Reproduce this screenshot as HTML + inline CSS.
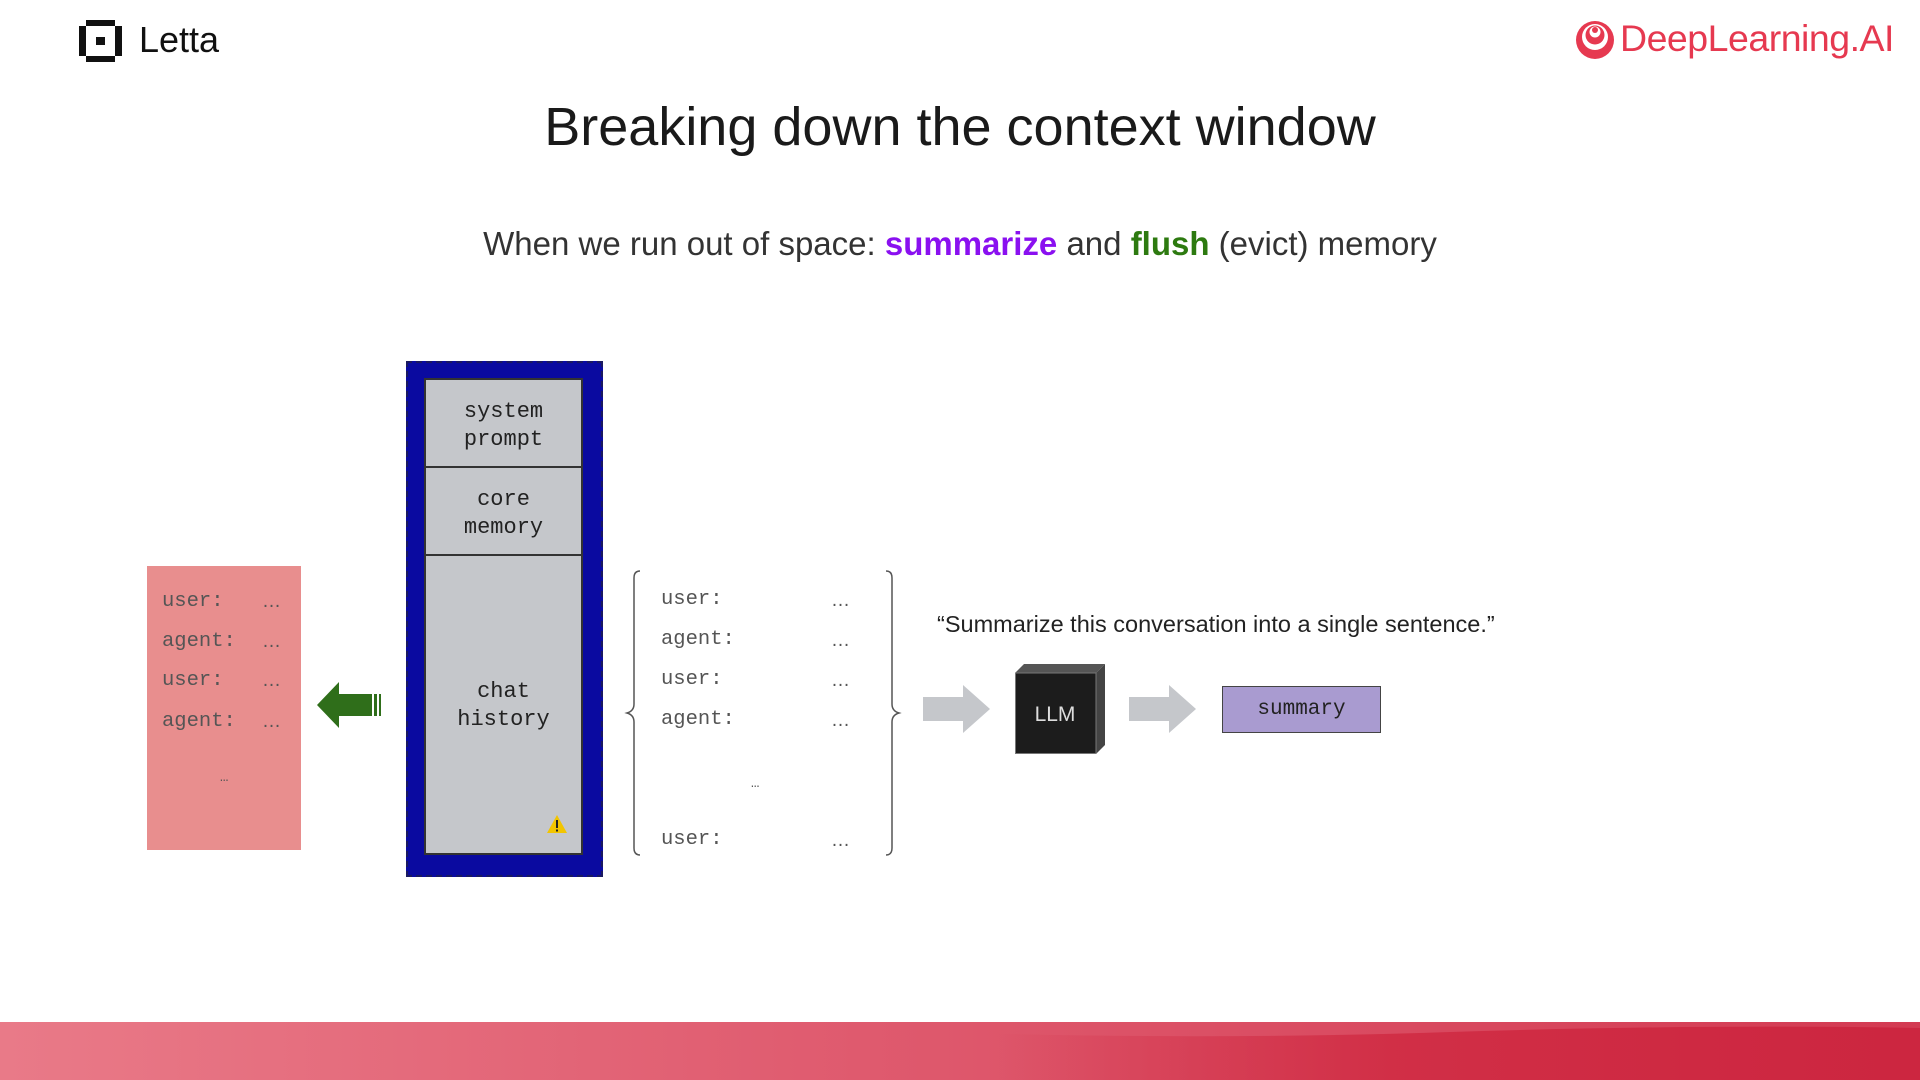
<!DOCTYPE html>
<html><head><meta charset="utf-8"><style>
*{margin:0;padding:0;box-sizing:border-box}
body{width:1920px;height:1080px;background:#fff;position:relative;overflow:hidden;font-family:"Liberation Sans",sans-serif;color:#111}
.a{position:absolute}
.mono{font-family:"Liberation Mono",monospace}
.c{text-align:center}
.d{font-family:"Liberation Sans",sans-serif;font-size:19px}
</style></head><body>
<!-- Letta logo -->
<svg class="a" style="left:79px;top:20px" width="43" height="42" viewBox="0 0 43 42">
<path d="M7 0h29v6h7v30h-7v6H7v-6H0V6h7z" fill="#111"/>
<rect x="7" y="6" width="29" height="30" fill="#fff"/>
<rect x="17" y="17" width="9" height="8" fill="#111"/>
</svg>
<div class="a" style="left:139px;top:19px;font-size:36px;color:#111">Letta</div>
<!-- DeepLearning.AI -->
<svg class="a" style="left:1575px;top:20px" width="40" height="40" viewBox="0 0 40 40">
<circle cx="20" cy="20" r="19" fill="#e63950"/>
<circle cx="20" cy="17" r="13" fill="#fff"/>
<circle cx="20" cy="15" r="9.5" fill="#e63950"/>
<circle cx="20" cy="12" r="5.5" fill="#fff"/>
<circle cx="20" cy="10" r="3" fill="#e63950"/>
</svg>
<div class="a" style="left:1620px;top:17px;font-size:37.5px;color:#e63950;letter-spacing:-0.5px">DeepLearning.AI</div>
<!-- Title -->
<div class="a c" style="left:0;width:1920px;top:96px;font-size:54px;color:#1a1a1a">Breaking down the context window</div>
<div class="a c" style="left:0;width:1920px;top:225px;font-size:33px;color:#333">When we run out of space: <b style="color:#8a10f0">summarize</b> and <b style="color:#2d7a10">flush</b> (evict) memory</div>
<!-- pink evicted box -->
<div class="a mono" style="left:147px;top:566px;width:154px;height:284px;background:#e88e8e;color:#555;font-size:20.5px">
<div class="a" style="left:15px;top:24px">user:</div><div class="a d" style="left:115px;top:25px">…</div>
<div class="a" style="left:15px;top:64px">agent:</div><div class="a d" style="left:115px;top:65px">…</div>
<div class="a" style="left:15px;top:103px">user:</div><div class="a d" style="left:115px;top:104px">…</div>
<div class="a" style="left:15px;top:144px">agent:</div><div class="a d" style="left:115px;top:145px">…</div>
<div class="a" style="left:73px;top:204px;font-size:14px">…</div>
</div>
<!-- green arrow -->
<svg class="a" style="left:317px;top:682px" width="68" height="46" viewBox="0 0 68 46">
<path d="M0 23 L22 0 V12 H55 V34 H22 V46 Z" fill="#2f6e1a"/>
<rect x="57" y="12" width="3" height="22" fill="#2f6e1a"/><rect x="62" y="12" width="2" height="22" fill="#2f6e1a"/>
</svg>
<!-- context window -->
<div class="a" style="left:406px;top:361px;width:197px;height:516px;background:#0a0aa0;border:2px dashed #1a1a60"></div>
<div class="a mono" style="left:424px;top:378px;width:159px;height:477px;background:#c5c7cb;border:2px solid #333;color:#222;font-size:22px">
<div class="a c" style="left:0;width:155px;top:18px;line-height:28px">system<br>prompt</div>
<div class="a" style="left:0;width:155px;top:86px;border-top:2px solid #333"></div>
<div class="a c" style="left:0;width:155px;top:106px;line-height:28px">core<br>memory</div>
<div class="a" style="left:0;width:155px;top:174px;border-top:2px solid #333"></div>
<div class="a c" style="left:0;width:155px;top:298px;line-height:28px">chat<br>history</div>
<svg class="a" style="left:120px;top:434px" width="22" height="20" viewBox="0 0 22 20"><path d="M11 1 L21 19 H1 Z" fill="#f2c500"/><rect x="10" y="6" width="2" height="8" fill="#222"/><rect x="10" y="15.5" width="2" height="2" fill="#222"/></svg>
</div>
<!-- braces -->
<svg class="a" style="left:624px;top:568px" width="280" height="290" viewBox="0 0 280 290">
<path d="M16 3 Q10 3 10 10 V136 Q10 143 3 145 Q10 147 10 154 V280 Q10 287 16 287" fill="none" stroke="#555" stroke-width="1.5"/>
<path d="M262 3 Q268 3 268 10 V136 Q268 143 275 145 Q268 147 268 154 V280 Q268 287 262 287" fill="none" stroke="#555" stroke-width="1.5"/>
</svg>
<div class="a mono" style="left:661px;top:590px;font-size:20.5px;color:#555;line-height:20px">
<div class="a" style="top:0">user:</div><div class="a d" style="left:170px;top:1px">…</div>
<div class="a" style="top:40px">agent:</div><div class="a d" style="left:170px;top:41px">…</div>
<div class="a" style="top:80px">user:</div><div class="a d" style="left:170px;top:81px">…</div>
<div class="a" style="top:120px">agent:</div><div class="a d" style="left:170px;top:121px">…</div>
<div class="a" style="left:90px;top:184px;font-size:14px">…</div>
<div class="a" style="top:240px">user:</div><div class="a d" style="left:170px;top:241px">…</div>
</div>
<!-- quote -->
<div class="a" style="left:937px;top:611px;font-size:23.5px;color:#222;white-space:nowrap">“Summarize this conversation into a single sentence.”</div>
<!-- gray arrows -->
<svg class="a" style="left:923px;top:685px" width="68" height="48" viewBox="0 0 68 48"><path d="M0 12 H40 V0 L67 24 L40 48 V36 H0 Z" fill="#c5c7cb"/></svg>
<svg class="a" style="left:1129px;top:685px" width="68" height="48" viewBox="0 0 68 48"><path d="M0 12 H40 V0 L67 24 L40 48 V36 H0 Z" fill="#c5c7cb"/></svg>
<!-- LLM cube -->
<svg class="a" style="left:1015px;top:664px" width="91" height="90" viewBox="0 0 91 90">
<path d="M0 9 L9 0 H90 L81 9 Z" fill="#555"/>
<path d="M81 9 L90 0 V81 L81 90 Z" fill="#444"/>
<rect x="0.5" y="9" width="80.5" height="80.5" fill="#1c1c1c" stroke="#777"/>
<text x="40" y="57" text-anchor="middle" font-family="Liberation Sans,sans-serif" font-size="21" fill="#ddd">LLM</text>
</svg>
<!-- summary -->
<div class="a mono c" style="left:1222px;top:686px;width:159px;height:47px;background:#a99bd0;border:1.5px solid #444;font-size:21px;line-height:46px;color:#222">summary</div>
<!-- bottom band -->
<svg class="a" style="left:0;top:1022px" width="1920" height="58" viewBox="0 0 1920 58">
<defs><linearGradient id="g" x1="0" x2="1"><stop offset="0" stop-color="#e97a88"/><stop offset="0.45" stop-color="#df5a6e"/><stop offset="1" stop-color="#d33a52"/></linearGradient>
<linearGradient id="h" x1="0" x2="1"><stop offset="0.3" stop-color="#cf2840" stop-opacity="0"/><stop offset="0.6" stop-color="#cf2840" stop-opacity="0.8"/><stop offset="1" stop-color="#cc2640"/></linearGradient></defs>
<rect width="1920" height="58" fill="url(#g)"/>
<path d="M700 0 Q1100 22 1450 10 Q1700 2 1920 6 V58 H600 Z" fill="url(#h)"/>
</svg>
</body></html>
